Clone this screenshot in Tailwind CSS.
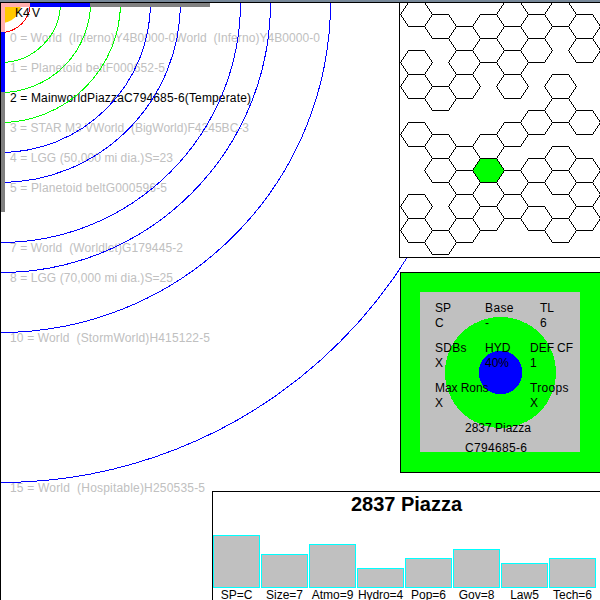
<!DOCTYPE html>
<html lang="en">
<head>
<meta charset="utf-8">
<title>2837 Piazza</title>
<script src="https://cdn.jsdelivr.net/npm/@tailwindcss/browser@4"></script>
</head>
<body class="relative h-[600px] w-[600px] overflow-hidden bg-white font-['Liberation_Sans',Arial,sans-serif] text-[12px] text-black">
<header class="h-[3px] border-b border-black bg-[#778899]"></header>

<!-- Orbit map -->
<main class="h-[597px] border-l border-black">
<svg id="orbits" class="block h-[597px] w-[599px]" viewBox="1 3 599 597">
  <path d="M1 3H21A20 20 0 0 1 1 23Z" fill="#ffc800"/>
  <g id="orbit-labels" fill="#c0c0c0"></g>
  <g id="rings" fill="none" stroke-width="1" shape-rendering="crispEdges"></g>
  <g shape-rendering="crispEdges">
    <path d="M1 3H30V7H5V32H1Z" fill="#ffafaf"/>
    <path d="M30 3H90V7H30ZM1 32H5V92H1Z" fill="#0000ff"/>
    <path d="M90 3H210V7H90ZM1 92H5V212H1Z" fill="#808080"/>
  </g>
  <text x="15" y="17">K4</text><text x="32" y="17">V</text>
</svg>
</main>

<!-- Sector hex map -->
<section class="absolute left-[399px] top-[3px] h-[255px] w-[201px] border-b border-l border-black bg-white">
<svg class="block h-[254px] w-[200px]" viewBox="400 3 200 254">
  <g id="hexes" fill="none" stroke="#000" stroke-width="1" shape-rendering="crispEdges"></g>
</svg>
</section>

<!-- World summary -->
<section class="absolute left-[400px] top-[272px] h-[201px] w-[200px] border-y border-l border-black bg-[#00ff00]">
<svg class="block h-[199px] w-[199px]" viewBox="401 273 199 199">
  <g shape-rendering="crispEdges">
    <rect x="420" y="292" width="160" height="160" fill="#c0c0c0"/>
    <circle cx="500.5" cy="372.5" r="55.5" fill="#00ff00"/>
    <circle cx="500.5" cy="372.5" r="21.7" fill="#0000ff"/>
  </g>
  <text x="435" y="312">SP</text><text x="485" y="312" textLength="28.5">Base</text><text x="540" y="312">TL</text>
  <text x="435" y="327">C</text><text x="485" y="327">-</text><text x="540" y="327">6</text>
  <text x="435" y="352" textLength="31.5">SDBs</text><text x="485" y="352">HYD</text><text x="530" y="352">DEF</text><text x="557" y="352">CF</text>
  <text x="435" y="367">X</text><text x="485" y="367">40%</text><text x="530" y="367">1</text>
  <text x="435" y="392" textLength="53.5">Max Rons</text><text x="530" y="392" textLength="38.5">Troops</text>
  <text x="435" y="407">X</text><text x="530" y="407">X</text>
  <text x="465" y="432" textLength="66">2837 Piazza</text>
  <text x="465" y="452" textLength="62">C794685-6</text>
</svg>
</section>

<!-- World profile chart -->
<section class="absolute left-[212px] top-[491px] flex h-[109px] w-[388px] flex-col border-l border-t border-black bg-white">
  <h1 class="h-[24px] shrink-0 text-center text-[20px] font-bold leading-[24px]">2837 Piazza</h1>
  <div class="flex h-[72px] shrink-0 items-end gap-px">
    <div class="h-[53px] w-[47px] border border-[#00ffff] bg-[#c0c0c0]"></div>
    <div class="h-[34px] w-[47px] border border-[#00ffff] bg-[#c0c0c0]"></div>
    <div class="h-[44px] w-[47px] border border-[#00ffff] bg-[#c0c0c0]"></div>
    <div class="h-[20px] w-[47px] border border-[#00ffff] bg-[#c0c0c0]"></div>
    <div class="h-[30px] w-[47px] border border-[#00ffff] bg-[#c0c0c0]"></div>
    <div class="h-[39px] w-[47px] border border-[#00ffff] bg-[#c0c0c0]"></div>
    <div class="h-[25px] w-[47px] border border-[#00ffff] bg-[#c0c0c0]"></div>
    <div class="h-[30px] w-[47px] border border-[#00ffff] bg-[#c0c0c0]"></div>
  </div>
  <div class="flex h-[12px] shrink-0 gap-px text-center leading-[14px]">
    <span class="w-[47px]">SP=C</span><span class="w-[47px]">Size=7</span><span class="w-[47px]">Atmo=9</span><span class="w-[47px] tracking-[-0.1px]">Hydro=4</span><span class="w-[47px]">Pop=6</span><span class="w-[47px]">Gov=8</span><span class="w-[47px]">Law5</span><span class="w-[47px]">Tech=6</span>
  </div>
</section>

<script>
const NS = 'http://www.w3.org/2000/svg';
function add(parent, tag, attrs, text) {
  const el = document.createElementNS(NS, tag);
  for (const k in attrs) el.setAttribute(k, attrs[k]);
  if (text) el.textContent = text;
  document.getElementById(parent).appendChild(el);
}

// [orbit number, label, width in px]
[
  [0, '0 = World\u00a0 (Inferno)Y4B0000-0World\u00a0 (Inferno)Y4B0000-0', 310],
  [1, '1 = Planetoid beltF000652-5', 155],
  [2, '2 = MainworldPiazzaC794685-6(Temperate)', 241],
  [3, '3 = STAR M3 VWorld\u00a0 (BigWorld)F4245BC-3', 239],
  [4, '4 = LGG (50,000 mi dia.)S=23', 163],
  [5, '5 = Planetoid beltG000596-5', 157],
  [7, '7 = World\u00a0 (Worldlet)G179445-2', 173],
  [8, '8 = LGG (70,000 mi dia.)S=25', 163],
  [10, '10 = World\u00a0 (StormWorld)H415122-5', 200],
  [15, '15 = World\u00a0 (Hospitable)H250535-5', 195]
].forEach(([n, t, w]) => add('orbit-labels', 'text',
  { x: 10, y: 42 + 30 * n, textLength: w, fill: n === 2 ? '#000' : '#c0c0c0' }, t));

[[30, '#f00'], [60, '#0f0'], [90, '#0f0'], [120, '#0f0'], [150, '#00f'], [180, '#00f'],
 [240, '#00f'], [270, '#00f'], [330, '#00f'], [480, '#00f']]
  .forEach(([r, c]) => add('rings', 'circle', { cx: 0.5, cy: 2.5, r, stroke: c }));

// Hex centre rows, one list per column
[
  [14, 62, 86, 134, 206, 230],
  [26, 98, 146, 170, 242],
  [38, 62, 86, 158, 182, 206, 230],
  [26, 50, 146, 170, 194, 218],
  [14, 38, 62, 86, 134, 182, 206],
  [26, 50, 122, 170, 218],
  [14, 86, 110, 158, 182, 230],
  [26, 50, 122, 170, 194, 218]
].forEach((rows, c) => rows.forEach(r => {
  const x = 416.5 + 24 * c, y = r + 0.5;
  add('hexes', 'path', {
    d: `M${x - 16} ${y}L${x - 8} ${y - 12}H${x + 8}L${x + 16} ${y}L${x + 8} ${y + 12}H${x - 8}Z`,
    fill: c === 3 && r === 170 ? '#0f0' : 'none'
  });
}));
</script>
</body>
</html>
